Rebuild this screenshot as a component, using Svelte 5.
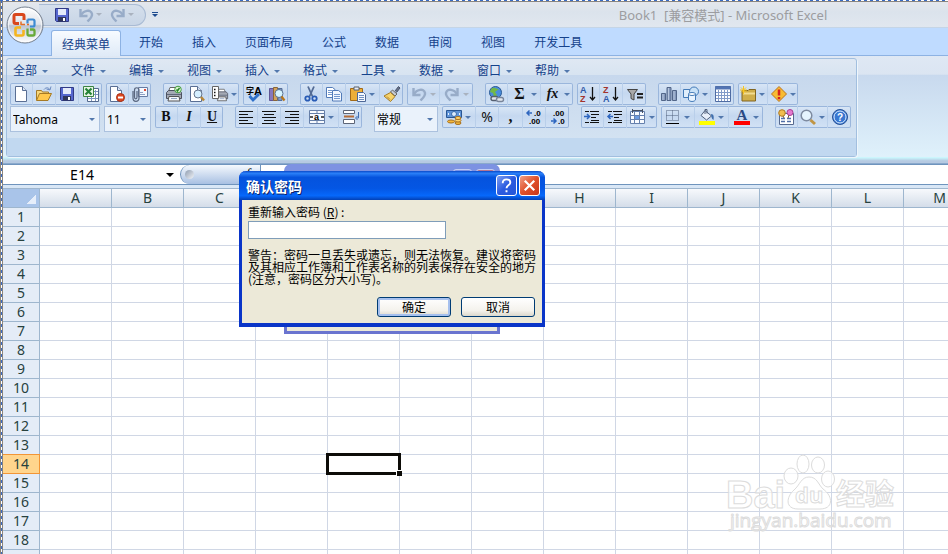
<script>
  const tabs = ["经典菜单", "开始", "插入", "页面布局", "公式", "数据", "审阅", "视图", "开发工具"];
  const menus = ["全部", "文件", "编辑", "视图", "插入", "格式", "工具", "数据", "窗口", "帮助"];
  const columns = "ABCDEFGHIJKLMNOPQRSTUVWXYZ".split("");
  const rows = Array.from({ length: 50 }, (_, i) => i + 1);

  let activeTab = $state("经典菜单");
  let selected = $state({ col: "E", row: 14 });
  let password = $state("");

  const page = `<path d="M2.500.5h7l4 4v11h-11z" fill="#fff" stroke="#5a6f94"/><path d="M9.500.5v4h4" fill="#dbe5f5" stroke="#5a6f94"/>`;
  const lines = (list) =>
    `<path d="${list.map(([x, y, w]) => `M${x} ${y}.5h${w}`).join("")}" stroke="#111" fill="none"/>`;
  const printer = `<path d="M4 1.500h7l1.500 4h-10z" fill="#fff" stroke="#666"/><path d="M.5 6.500l2-2h11l2 2v6H.5z" fill="#a4a9b4" stroke="#4d5260"/><path d="M1 8.500h14" stroke="#60687a"/><path d="M3 10.500h10l1 4.500H2z" fill="#f4f6fa" stroke="#555"/><path d="M5 12.500h6" stroke="#8fa3c0"/>`;
  const undo = `<path d="M2.500 2v7h7" fill="none" stroke="#98acc8" stroke-width="2.400"/><path d="M3 8.500c2-5 10-7 11-1.500.5 3-2 5-4.500 7.500" fill="none" stroke="#98acc8" stroke-width="2.400"/>`;

  const icons = {
    page,
    undo,
    redo: `<g transform="matrix(-1 0 0 1 16 0)">${undo}</g>`,
    open: `<path d="M.5 14V4.500h5l1 1.500h6v3" fill="#f7d77c" stroke="#a67a25"/><path d="M.5 14.500l3-7h12l-3.500 7z" fill="#ffc84c" stroke="#a67a25"/><path d="M8 3.500c2-2.500 5-2 5.500 0M15 .5l-1 3.500-3.500-1" fill="none" stroke="#6b8ac0"/>`,
    save: `<path d="M1.500 1.500h13v13h-12l-1-1z" fill="#5667ce" stroke="#303a86"/><path d="M4 2h8v6H4z" fill="#e4eafa"/><path d="M4 10h8v4.500H4z" fill="#30365a"/><path d="M9 11h2v3H9z" fill="#fff"/>`,
    excel: `<path d="M7.500 2.500h8v13h-11v-5" fill="#fff" stroke="#53698d"/><path d="M11 5.500h4M11 8.500h4M5 12.500h10M12.500 4v11M8.500 11v4" stroke="#7c94bd"/><path d="M.5.5h10v10H.5z" fill="#e8f5e4" stroke="#3c8443"/><path d="M2.500 2.500l6 6M8.500 2.500l-6 6" stroke="#248337" stroke-width="2.200"/>`,
    deny: `<g transform="translate(-1 0)">${page}</g><circle cx="11.500" cy="11.500" r="4" fill="#dd4721" stroke="#a83216"/><path d="M9 11.500h5" stroke="#fff" stroke-width="2"/>`,
    mail: `<path d="M6.500 1.500h9v9h-9z" fill="#f4f8ff" stroke="#667ca5"/><path d="M8 8.500h5M8 6.500h3" stroke="#8da1c4"/><path d="M12 3h2v2h-2z" fill="#dc4a34"/><path d="M1 5v7c0 4.500 6 4.500 6 0V4c0-3-4.500-3-4.500 0v7c0 2.500 2.500 2.500 2.500 0V5" fill="none" stroke="#59667e" stroke-width="1.200"/>`,
    print: `${printer}<circle cx="12" cy="3.500" r="3.300" fill="#d9f2cf" stroke="#439b40"/><path d="M10.500 3.500l1 1.500 2-3" fill="none" stroke="#258525" stroke-width="1.400"/>`,
    preview: `<g transform="translate(-1 0)">${page}</g><circle cx="9" cy="8" r="4" fill="#d5efff" stroke="#66758c"/><path d="M12 11l3 3.500" stroke="#b78738" stroke-width="2.500"/>`,
    printset: `<g transform="translate(4 2) scale(.75 .85)">${printer}</g><path d="M.5.5h6v12h-6z" fill="#fff" stroke="#666"/><path d="M2 3.500h1.500M2 6.500h1.500M2 9.500h1.500" stroke="#111" stroke-width="1.500"/>`,
    spell: `<text x="0" y="8" font-size="8">字</text><text x="8" y="9" font-size="11">A</text><path d="M3.500 10l3.500 4 6-6" fill="none" stroke="#2f70c9" stroke-width="2.800"/>`,
    research: `<path d="M.5 2.500h4v12h-4z" fill="#8678bd" stroke="#5f5696"/><path d="M4.500 1.500h4v13h-4z" fill="#d4a35b" stroke="#896537"/><path d="M9 2.500h4v12H9z" fill="#809bc8" stroke="#546e99"/><circle cx="10" cy="7.500" r="4" fill="#d5f4ff" stroke="#5a718f"/><path d="M12.500 10.500l3 4" stroke="#b9771b" stroke-width="2.200"/>`,
    cut: `<path d="M5 .5l4.500 10M11 .5L6.500 10.500" stroke="#536b95" stroke-width="1.800"/><circle cx="4.500" cy="12.500" r="2.200" fill="none" stroke="#285bb5" stroke-width="1.800"/><circle cx="11.500" cy="12.500" r="2.200" fill="none" stroke="#285bb5" stroke-width="1.800"/>`,
    copy: `<path d="M.5 1.500h6l2.500 2v8H.5z" fill="#fff" stroke="#527bb8"/><path d="M6.500 4.500h6l3 2.500v8h-9z" fill="#f1f7ff" stroke="#527bb8"/><path d="M2 4.500h4M2 6.500h4M2 8.500h4M8 8.500h6M8 10.500h6M8 12.500h6" stroke="#7398ce"/>`,
    paste: `<path d="M.5 2.500h12v12H.5z" fill="#eeaf38" stroke="#a26a18"/><path d="M4 1h5v3H4z" fill="#e9edf3" stroke="#59616e"/><path d="M7.500 6.500h6l2 2v7h-8z" fill="#f5f9ff" stroke="#4e6897"/><path d="M9 9.500h5M9 11.500h5M9 13.500h5" stroke="#7090c0"/>`,
    brush: `<path d="M11 5l3.500-4.500 1.500 1.500-3.500 4.500" fill="#68748a" stroke="#48536c"/><path d="M8.500 4l4.500 4-2 2-4.500-4z" fill="#c5cbd6" stroke="#666"/><path d="M6.500 6.500l4.500 4-4.500 5-6.500-5.500z" fill="#f7d46c" stroke="#a47b27"/><path d="M3 10.500l3 3" stroke="#b7852e"/>`,
    link: `<circle cx="7.500" cy="6.500" r="6" fill="#4a8ddd" stroke="#285892"/><path d="M3 3c3-3 5 0 8 0l-4 3 2 3-3 2-1-4-3-1z" fill="#72b848"/><rect x="3" y="10.500" width="7" height="4" rx="2" fill="#e2e7ee" stroke="#555f70" stroke-width="1.400"/><rect x="8.500" y="11.500" width="7" height="4" rx="2" fill="#e2e7ee" stroke="#79859a" stroke-width="1.400"/>`,
    az: `<text x="0" y="7" font-size="9" fill="#315aa8">A</text><text x="0" y="16" font-size="9" fill="#a3332c">Z</text><path d="M12.500 1v13M10 11l2.500 3 2.500-3" fill="none" stroke="#111" stroke-width="1.300"/>`,
    za: `<text x="0" y="7" font-size="9" fill="#a3332c">Z</text><text x="0" y="16" font-size="9" fill="#315aa8">A</text><path d="M12.500 1v13M10 11l2.500 3 2.500-3" fill="none" stroke="#111" stroke-width="1.300"/>`,
    filter: `<path d="M.5 3.500h10l-3.500 4.500v6l-3-1.500V8z" fill="#aaa" stroke="#444"/><path d="M10 8h6M10 11.500h6" stroke="#222" stroke-width="1.800"/>`,
    chart: `<path d="M.5 7.500h4v7h-4zM6 1.500h4v13H6zM11.500 4.500h4v10h-4z" fill="#8498bb" stroke="#526689"/><path d="M2 8v6M7.500 2v12M13 5v9" stroke="#b8c8df"/>`,
    shapes: `<path d="M.5 3.500h8v8h-8z" fill="#e0eefb" stroke="#447bb8"/><circle cx="11" cy="5.500" r="4.500" fill="#c8e1f7" stroke="#447bb8"/><path d="M5.500 8v6c1 2 6 2 7 0V8z" fill="#e9f4ff" stroke="#447bb8"/><ellipse cx="9" cy="8" rx="3.500" ry="1.500" fill="#fff" stroke="#447bb8"/>`,
    table: `<path d="M.5.5h15v15H.5z" fill="#fff" stroke="#4f6ca3"/><path d="M0 2h16" stroke="#5274b3" stroke-width="3"/><path d="M1 6.500h14M1 9.500h14M1 12.500h14M3.500 4v11M6.500 4v11M9.500 4v11M12.500 4v11" stroke="#829bc8"/>`,
    folder: `<path d="M2 4.500h6l1-1h6.500v11.500H2z" fill="#cfae4b" stroke="#806522"/><path d="M3 7.500h12" stroke="#f2dc91" stroke-width="2"/><path d="M3.500 0v8M0 4h7M1 1.500l5 5M6 1.500l-5 5" stroke="#f9c51e"/>`,
    warn: `<path d="M8 .5L15.500 8 8 15.500.5 8z" fill="#f7bb32" stroke="#bc731b"/><path d="M8 3.500v6M8 11v2.200" stroke="#d5211c" stroke-width="2.500"/>`,
    left: lines([[1, 2, 14], [1, 5, 9], [1, 8, 14], [1, 11, 9], [1, 14, 14]]),
    center: lines([[1, 2, 14], [3, 5, 10], [1, 8, 14], [3, 11, 10], [1, 14, 14]]),
    right: lines([[1, 2, 14], [6, 5, 9], [1, 8, 14], [6, 11, 9], [1, 14, 14]]),
    merge: `<path d="M.5 1.500h15v13H.5zM.5 4.500h15M.5 11.500h15M8 1.500v3M8 11.500v3" fill="#f8fbff" stroke="#667fa8"/><text x="5" y="11" font-size="9">a</text><path d="M1 8h3M12 8h3" stroke="#222" stroke-width="1.500"/>`,
    wrap: `<path d="M.5 1.500h11v3H.5zM.5 10.500h11v4H.5z" fill="#fff" stroke="#5c6577"/><path d="M1 7.500h10" stroke="#b66c36" stroke-width="2"/><path d="M15.500 3v6h-2M14.500 7l-2 2 2 2" fill="none" stroke="#426fb1"/>`,
    money: `<path d="M.5 1.500h15v7H.5z" fill="#5f94d8" stroke="#285694"/><circle cx="8" cy="5" r="2.500" fill="#dcecff" stroke="#3c6ca9"/><path d="M2.500 4v2M13.500 4v2" stroke="#e6f2ff"/><ellipse cx="5" cy="12.500" rx="3.500" ry="1.500" fill="#f4b83c" stroke="#a66f1e"/><ellipse cx="12" cy="14" rx="3" ry="1.500" fill="#f4b83c" stroke="#a66f1e"/><ellipse cx="12" cy="11.500" rx="3" ry="1.500" fill="#ffd46c" stroke="#a66f1e"/><ellipse cx="12" cy="9" rx="3" ry="1.500" fill="#ffd46c" stroke="#a66f1e"/>`,
    decinc: `<path d="M6 4H1M3.500 1.500L1 4l2.500 2.500" fill="none" stroke="#2e66bf" stroke-width="1.500"/><text x="8" y="7" font-size="8">.0</text><text x="3" y="15" font-size="8">.00</text>`,
    decdec: `<path d="M1 12h5M3.500 9.500L6 12l-2.500 2.500" fill="none" stroke="#2e66bf" stroke-width="1.500"/><text x="3" y="7" font-size="8">.00</text><text x="8" y="15" font-size="8">.0</text>`,
    outdent: `${lines([[1, 2, 4], [6, 2, 9], [7, 5, 8], [7, 8, 5], [7, 11, 8], [1, 13, 4], [6, 13, 9]])}<path d="M0 7.500h5M3 5l2.500 2.500L3 10" fill="none" stroke="#2e66bf" stroke-width="1.500"/>`,
    indent: `${lines([[1, 2, 4], [6, 2, 9], [7, 5, 8], [7, 8, 5], [7, 11, 8], [1, 13, 4], [6, 13, 9]])}<path d="M6 7.500H1M3.500 5L1 7.500 3.500 10" fill="none" stroke="#2e66bf" stroke-width="1.500"/>`,
    cells: `<path d="M.5 2.500h14v12H.5zM4.500 2.500v12M9.500 2.500v12M.5 6.500h14M.5 10.500h14" fill="#f8fbff" stroke="#6580ad"/><path d="M5 7h4v3H5z" fill="#6c9be0"/><path d="M2.500 0v4M12.500 0v4M3 1.500h9" stroke="#454f60"/>`,
    borders: `<path d="M1.500 1.500h12v10h-12zM7.500 1.500v10M1.500 6.500h12" fill="none" stroke="#51617d" stroke-dasharray="1 1"/><path d="M1 14.500h13" stroke="#000"/>`,
    fill: `<path d="M6 1.500L12.500 7l-5 4L2 6.500z" fill="#e7eef9" stroke="#51617d"/><path d="M6 5V.5h2v4" fill="none" stroke="#51617d"/><path d="M12 5c3 0 3 3 2.500 6-2-1-2-3-2.500-6z" fill="#3f6fae"/><path d="M0 12h16v4H0z" fill="#ff0"/>`,
    color: `<text x="2.500" y="11" font-size="15" font-family="Liberation Serif, serif" fill="#2c4b84">A</text><path d="M0 12h16v4H0z" fill="#f00"/>`,
    form: `<path d="M1.500 4.500h14v11h-14z" fill="#fff" stroke="#56698e"/><path d="M3 9.500h4M3 12.500h4M9 9.500h4M9 12.500h4" stroke="#526fa7" stroke-width="1.500"/><circle cx="4" cy="4" r="3.300" fill="#f1bd4f" stroke="#af7a20"/><circle cx="12" cy="3.500" r="3" fill="#e47acf" stroke="#a93f94"/><path d="M5 7l1 2M11 6l-1 3" stroke="#765437"/>`,
    zoom: `<circle cx="6.500" cy="6.500" r="5.300" fill="#e6f5ff" stroke="#7e8ba0" stroke-width="1.500"/><path d="M10.500 11l4.500 4" stroke="#c09544" stroke-width="3"/>`,
    help: `<circle cx="8" cy="8" r="7.500" fill="#3977d1" stroke="#285296"/><circle cx="8" cy="8" r="6" fill="none" stroke="#d9eaff"/><text x="5" y="12" font-size="10" fill="#fff">?</text>`
  };

  // w: cell width, drop: has an arrow, glyph: lettered button
  const topClusters = [
    [
      [{ icon: "page", w: 23 }, { icon: "open", w: 23 }, { icon: "save", w: 23 }, { icon: "excel", w: 23 }],
      [{ icon: "deny", w: 23 }, { icon: "mail", w: 22 }]
    ],
    [
      [{ icon: "print", w: 23 }, { icon: "preview", w: 23 }, { icon: "printset", w: 30, drop: true }],
      [{ icon: "spell", w: 23 }, { icon: "research", w: 22 }]
    ],
    [
      [{ icon: "cut", w: 23 }, { icon: "copy", w: 23 }, { icon: "paste", w: 34, drop: true }, { icon: "brush", w: 23 }],
      [{ icon: "undo", w: 33, drop: true, off: true }, { icon: "redo", w: 33, drop: true, off: true }]
    ],
    [
      [{ icon: "link", w: 23 }, { glyph: "Σ", kind: "big", w: 33, drop: true }, { glyph: "fx", kind: "fx", w: 32, drop: true }],
      [{ icon: "az", w: 23 }, { icon: "za", w: 23 }, { icon: "filter", w: 23 }]
    ],
    [
      [{ icon: "chart", w: 23 }, { icon: "shapes", w: 30, drop: true }, { icon: "table", w: 23 }],
      [{ icon: "folder", w: 30, drop: true }, { icon: "warn", w: 30, drop: true }]
    ]
  ];
  const bottomClusters = [
    [
      { options: ["Tahoma", "Arial"], label: "字体", w: 90 },
      { options: ["11", "12"], label: "字号", w: 47 },
      [{ glyph: "B", w: 23 }, { glyph: "I", kind: "it", w: 23 }, { glyph: "U", kind: "un", w: 22 }]
    ],
    [[{ icon: "left", w: 23 }, { icon: "center", w: 23 }, { icon: "right", w: 23 }, { icon: "merge", w: 35, drop: true }, { icon: "wrap", w: 23 }]],
    [
      { options: ["常规", "数值"], label: "数字格式", w: 64 },
      [{ icon: "money", w: 34, drop: true }, { glyph: "%", kind: "sans", w: 23 }, { glyph: ",", kind: "big", w: 24 }, { icon: "decinc", w: 23 }, { icon: "decdec", w: 23 }]
    ],
    [
      [{ icon: "outdent", w: 23 }, { icon: "indent", w: 23 }, { icon: "cells", w: 30, drop: true }],
      [{ icon: "borders", w: 34, drop: true }, { icon: "fill", w: 34, drop: true }, { icon: "color", w: 34, drop: true }]
    ],
    [[{ icon: "form", w: 23 }, { icon: "zoom", w: 30, drop: true }, { icon: "help", w: 23 }]]
  ];
</script>

<svelte:head><title>Book1 - Microsoft Excel</title></svelte:head>

{#snippet svg(name)}
  <svg class="icon" viewBox="0 0 16 16" aria-hidden="true">{@html icons[name]}</svg>
{/snippet}

{#snippet bar(clusters)}
  <div class="toolbar">
    {#each clusters as cluster}
      <div class="cluster">
        {#each cluster as item}
          {#if item.options}
            <div class="combo" style="width: {item.w}px">
              <select aria-label={item.label}>
                {#each item.options as option}<option>{option}</option>{/each}
              </select>
              <i class="arrow"></i>
            </div>
          {:else}
            <div class="group">
              {#each item as cell}
                <button class="cell {cell.kind ?? ''}" class:off={cell.off} style="width: {cell.w}px" aria-label={cell.icon ?? cell.glyph}>
                  {#if cell.icon}{@render svg(cell.icon)}{:else}<span class="glyph">{cell.glyph}</span>{/if}
                  {#if cell.drop}<i class="arrow"></i>{/if}
                </button>
              {/each}
            </div>
          {/if}
        {/each}
      </div>
    {/each}
  </div>
{/snippet}

<div class="screen">
  <div class="window">
    <header class="titlebar">
      <div class="quick">
        <button aria-label="保存">{@render svg("save")}</button>
        <button class="off" aria-label="撤消">{@render svg("undo")}<i class="arrow"></i></button>
        <button class="off" aria-label="恢复">{@render svg("redo")}<i class="arrow"></i></button>
      </div>
      <button class="customize" aria-label="自定义快速访问工具栏"><i class="arrow"></i></button>
      <h1>Book1  [兼容模式] - Microsoft Excel</h1>
    </header>

    <button class="orb" aria-label="Office 按钮">
      <svg viewBox="0 0 38 38" aria-hidden="true">
        <defs>
          <linearGradient id="orbFill" x1="0" y1="0" x2="0" y2="1">
            <stop offset="0" stop-color="#fff" />
            <stop offset=".48" stop-color="#dfe3ea" />
            <stop offset=".52" stop-color="#bcc5d3" />
            <stop offset="1" stop-color="#fff" />
          </linearGradient>
        </defs>
        <circle cx="19" cy="19" r="18" fill="url(#orbFill)" stroke="#75808f" />
        <circle cx="19" cy="19" r="16.500" fill="none" stroke="#fff" stroke-opacity=".7" />
        <g fill="none" stroke-linejoin="round">
          <path d="M13 17.500H9.500q-1.500 0-1.500-1.500V10q0-1.500 1.500-1.500h7q1.500 0 1.500 1.500v4" stroke="#d9471c" stroke-width="3" />
          <path d="M21.500 13.500h5.500q1.500 0 1.500 1.500v4q0 1.500-1.500 1.500h-3M21.500 13.500v4" stroke="#3d8bd3" stroke-width="2.200" />
          <path d="M15 21.500h-4q-1.500 0-1.500 1.500v5q0 1.500 1.500 1.500h5q1.500 0 1.500-1.500v-4" stroke="#f5b51e" stroke-width="2.600" />
          <path d="M21.500 22.500v5.500q0 1.500 1.500 1.500h4q1.500 0 1.500-1.500v-3q0-1.500-1.500-1.500h-3" stroke="#68aa38" stroke-width="2.300" />
          <path d="M15 15.500v3h4M23 18.500h-2" stroke="#e46d25" stroke-width="1.500" />
        </g>
      </svg>
    </button>

    <nav class="tabs">
      {#each tabs as tab}
        <button class="tab" class:active={tab === activeTab} onclick={() => (activeTab = tab)}>{tab}</button>
      {/each}
    </nav>

    <section class="ribbon">
      <div class="panel">
        <div class="menus">
          {#each menus as menu}
            <button class="menu">{menu}<i class="arrow"></i></button>
          {/each}
        </div>
        {@render bar(topClusters)}
        {@render bar(bottomClusters)}
        <div class="caption"></div>
      </div>
    </section>

    <div class="formula">
      <div class="namebox">
        <input aria-label="名称框" value="{selected.col}{selected.row}" readonly />
        <i class="arrow"></i>
      </div>
      <div class="fxbar"><i class="knob"></i><button aria-label="插入函数">fx</button></div>
      <input class="entry" aria-label="编辑栏" />
    </div>
    <div class="splitter"></div>

    <div class="sheet">
      <table>
        <thead>
          <tr>
            <th class="corner" aria-label="全选"></th>
            {#each columns as col}<th class="colhead">{col}</th>{/each}
          </tr>
        </thead>
        <tbody>
          {#each rows as row}
            <tr>
              <th class="rowhead" class:current={row === selected.row}>{row}</th>
              {#each columns as col}
                <td class:picked={row === selected.row && col === selected.col} onclick={() => (selected = { col, row })}></td>
              {/each}
            </tr>
          {/each}
        </tbody>
      </table>
    </div>
  </div>

  <div class="ghost"><div class="ghost-buttons"><i></i><i></i></div></div>

  <form class="dialog" onsubmit={(e) => e.preventDefault()}>
    <div class="caption-bar">
      <h2>确认密码</h2>
      <button type="button" class="sys" aria-label="帮助">
        <svg viewBox="0 0 20 20"><path d="M6 7.500c0-5.500 8-5 8-.5 0 2.500-4 2.500-4 6M10 15v2" fill="none" stroke="#fff" stroke-width="2" /></svg>
      </button>
      <button type="button" class="sys close" aria-label="关闭">
        <svg viewBox="0 0 20 20"><path d="M5 5l10 10M15 5L5 15" stroke="#fff" stroke-width="2.300" /></svg>
      </button>
    </div>
    <div class="content">
      <label for="again">重新输入密码 (<u>R</u>) :</label>
      <input id="again" type="password" bind:value={password} />
      <p>警告：密码一旦丢失或遗忘，则无法恢复。建议将密码及其相应工作簿和工作表名称的列表保存在安全的地方(注意，密码区分大小写)。</p>
      <div class="actions">
        <button type="submit" class="push primary">确定</button>
        <button type="button" class="push">取消</button>
      </div>
    </div>
  </form>

  <svg class="watermark" viewBox="0 0 176 84" aria-hidden="true">
    <g class="mark">
      <ellipse cx="67" cy="24" rx="7" ry="8" />
      <ellipse cx="79" cy="12" rx="6" ry="9" />
      <ellipse cx="94" cy="13" rx="6.500" ry="8" />
      <ellipse cx="104" cy="27" rx="6.500" ry="8" />
      <path d="M85 25c8 0 9 7 14 12 11 8 10 20-3 20H74c-13 0-12-12-4-19 6-5 7-13 15-13z" />
      <text x="2" y="56" font-size="38" font-weight="bold">Bai</text>
      <text class="url" x="71" y="51" font-size="22" font-weight="bold">du</text>
      <text x="112" y="53" font-size="29" font-weight="bold">经验</text>
      <text class="url" x="6" y="75" font-size="19">jingyan.baidu.com</text>
    </g>
  </svg>
</div>

<style>
  :global(body) {
    overflow: hidden;
    font-family: "Noto Sans", "Noto Sans CJK SC", sans-serif;
    font-size: 12px;
  }
  .screen {
    position: relative;
    box-sizing: border-box;
    height: 100vh;
    overflow: hidden;
    padding: 2px 0 0 3px;
    background:
      repeating-linear-gradient(90deg, #3a6bc4 0 3px, #fff 3px 6px) 0 0 / 100% 1px no-repeat,
      repeating-linear-gradient(#3a6bc4 0 3px, #fff 3px 6px) 1px 0 / 1px 100% no-repeat,
      #8a857e;
  }
  .window {
    position: relative;
    display: flex;
    flex-direction: column;
    height: 100%;
    background: #fff;
  }
  button {
    margin: 0;
    padding: 0;
    border: 0;
    background: none;
    font: inherit;
    color: inherit;
  }
  input,
  select {
    box-sizing: border-box;
    min-width: 0;
    border: 0;
    outline: 0;
    font: inherit;
  }
  .icon {
    flex: none;
    width: 16px;
    height: 16px;
    overflow: visible;
    font-family: "Liberation Sans", "Noto Sans CJK SC", sans-serif;
    font-weight: 700;
  }
  .arrow {
    flex: none;
    width: 0;
    height: 0;
    border: 3px solid transparent;
    border-top-color: #5278ad;
    border-bottom: 0;
  }
  .off .arrow {
    border-top-color: #a9b2bf;
  }

  .titlebar {
    display: flex;
    align-items: center;
    height: 26px;
    box-sizing: border-box;
    padding-left: 36px;
    border-bottom: 1px solid #c5d5e6;
    background: linear-gradient(#e4e7ec, #dbe3ec 40%, #e1e7ef);
  }
  .quick {
    display: flex;
    align-items: center;
    gap: 8px;
    height: 22px;
    box-sizing: border-box;
    padding: 0 11px 0 15px;
    border: 1px solid #a9bbd4;
    border-left: 0;
    border-radius: 0 11px 11px 0;
    background: linear-gradient(#d5dfec, #c8d5e6);
  }
  .quick button {
    display: flex;
    align-items: center;
    gap: 2px;
  }
  .customize {
    margin: 0 6px;
    padding-top: 1px;
    border-top: 1px solid #1d4b8f;
  }
  .customize .arrow {
    display: block;
    border-top-color: #1d4b8f;
  }
  h1 {
    flex: 1;
    margin: 0;
    padding-left: 390px;
    padding-right: 56px;
    text-align: center;
    font-size: 13px;
    font-weight: 400;
    line-height: 24px;
    white-space: pre;
    color: #9c9da0;
  }
  .orb {
    position: absolute;
    left: 3px;
    top: 4px;
    z-index: 1;
    width: 38px;
    height: 38px;
  }
  .orb svg {
    display: block;
  }

  .tabs {
    display: flex;
    align-items: flex-end;
    gap: 7px;
    box-sizing: border-box;
    height: 28px;
    padding-left: 48px;
    border-bottom: 1px solid #8db2e3;
    background: #bfdbff;
    color: #15428b;
  }
  .tab {
    height: 26px;
    padding: 0 11px;
  }
  .tab.active {
    margin-bottom: -1px;
    padding: 0 10px;
    border: 1px solid #8db2e3;
    border-bottom: 0;
    border-radius: 3px 3px 0 0;
    background: linear-gradient(#f7fbff, #dfeaf7);
  }

  .ribbon {
    padding: 2px 91px 6px 3px;
    border-bottom: 1px solid #8aa9cc;
    background: linear-gradient(#dfe8f4, #dbe5f2 17%, #c8d9ee 18%, #dff1fb 94%, #c9f6fc 95%, #b6cae2 98%);
  }
  .panel {
    box-sizing: border-box;
    border: 1px solid #a2bfdf;
    border-radius: 3px;
    background: linear-gradient(#dfe8f3, #d8e4f1 16%, #c7d8ed 17%, #d6e5f3);
    box-shadow: 1px 1px #eef6fc;
  }
  .menus {
    display: flex;
    height: 24px;
    padding-left: 6px;
    color: #15428b;
  }
  .menu {
    display: flex;
    align-items: center;
    gap: 5px;
    width: 58px;
    line-height: 22px;
  }
  .toolbar {
    display: flex;
    align-items: flex-start;
    gap: 12px;
    padding-left: 3px;
    margin-bottom: 1px;
  }
  .cluster {
    display: flex;
    gap: 4px;
  }
  .group {
    display: flex;
    height: 22px;
    border-radius: 2px;
    background: linear-gradient(#dae7f6, #c5d8f0 45%, #d2e2f5);
    box-shadow: inset 0 0 0 1px #9ab6dc;
  }
  .cell {
    display: flex;
    align-items: center;
    justify-content: center;
    gap: 3px;
    box-sizing: border-box;
    border-right: 1px solid #b9cfea;
  }
  .cell:last-child {
    border-right: 0;
  }
  .glyph {
    width: 16px;
    text-align: center;
    font-family: "Liberation Serif", serif;
    font-size: 14px;
    font-weight: 700;
    line-height: 20px;
    color: #111;
  }
  .it .glyph,
  .fx .glyph {
    font-style: italic;
  }
  .un .glyph {
    text-decoration: underline;
  }
  .big .glyph {
    font-size: 16px;
  }
  .sans .glyph {
    font-family: "Noto Sans", sans-serif;
    font-weight: 400;
  }
  .combo {
    display: flex;
    align-items: center;
    box-sizing: border-box;
    height: 26px;
    padding-right: 4px;
    border: 1px solid #abc1de;
    background: #eaf2fb;
  }
  .combo select {
    flex: 1;
    height: 24px;
    padding: 0 2px;
    appearance: none;
    background: none;
    color: #000;
  }
  .caption {
    height: 18px;
    margin-top: 6px;
    background: #c1d8f0;
  }

  .formula {
    display: flex;
    box-sizing: border-box;
    height: 21px;
    border: solid #6f94bd;
    border-width: 1px 0;
    font-size: 14px;
  }
  .namebox {
    display: flex;
    align-items: center;
    width: 177px;
    box-sizing: border-box;
    padding-right: 6px;
  }
  .namebox input {
    flex: 1;
    height: 19px;
    padding: 0 5px 0 0;
    text-align: center;
    background: none;
  }
  .namebox .arrow {
    border-width: 4px 4px 0;
    border-top-color: #000;
  }
  .fxbar {
    display: flex;
    align-items: center;
    justify-content: space-between;
    width: 81px;
    box-sizing: border-box;
    padding: 0 4px;
    border: solid #6f94bd;
    border-width: 0 1px;
    border-radius: 10px 0 0 10px;
    background: linear-gradient(#f5f9fe, #a8c0e2);
    font-family: "Liberation Serif", serif;
    font-style: italic;
  }
  .knob {
    width: 9px;
    height: 9px;
    border-radius: 50%;
    background: linear-gradient(135deg, #8e9cb0, #f3f5f8);
  }
  .entry {
    flex: 1;
  }
  .splitter {
    flex: none;
    height: 4px;
    box-sizing: border-box;
    border-bottom: 1px solid #9eb6ce;
    background: #d9e7f6;
  }

  .sheet {
    flex: 1;
    min-height: 0;
    overflow: hidden;
  }
  table {
    border-collapse: separate;
    border-spacing: 0;
    font-size: 14px;
    line-height: 18px;
    color: #27413e;
  }
  th,
  td {
    position: relative;
    box-sizing: border-box;
    height: 19px;
    padding: 0;
    border: solid #d0d7e5;
    border-width: 0 1px 1px 0;
    font-weight: 400;
  }
  .colhead {
    min-width: 72px;
    border-color: #9eb6ce;
    background: linear-gradient(#f7f9fc, #d4dde9);
  }
  .corner,
  .rowhead {
    min-width: 37px;
    border-color: #9eb6ce;
    background: #e4ecf7;
  }
  .corner {
    background: linear-gradient(135deg, transparent 50%, #e6eefa 51%) 23px 5px / 10px 10px no-repeat, #a9c4e9;
  }
  .current {
    border-color: #f29536;
    background: #ffd58d;
    box-shadow: 0 -1px #f29536;
  }
  .picked {
    z-index: 1;
  }
  .picked::before {
    content: "";
    position: absolute;
    inset: -2px;
    border: 3px solid #0d0c08;
  }
  .picked::after {
    content: "";
    position: absolute;
    right: -3px;
    bottom: -3px;
    width: 5px;
    height: 5px;
    border: solid #fff;
    border-width: 1px 0 0 1px;
    background: #0d0c08;
  }

  .ghost {
    position: absolute;
    left: 284px;
    top: 164px;
    z-index: 1;
    width: 216px;
    height: 170px;
    box-sizing: border-box;
    border: 3px solid #6a74cf;
    border-top: 24px solid #7d92e2;
    border-radius: 7px 7px 0 0;
    background: #ece9d8;
  }
  .ghost-buttons {
    display: flex;
    justify-content: flex-end;
    gap: 4px;
    margin: -19px 2px 0 0;
  }
  .ghost-buttons i {
    width: 19px;
    height: 19px;
    box-sizing: border-box;
    border: 1px solid #c4cdf2;
    border-radius: 3px;
    background: #7c93e6;
  }
  .ghost-buttons i:last-child {
    background: #b5748f;
  }

  .dialog {
    position: absolute;
    left: 239px;
    top: 171px;
    z-index: 2;
    width: 306px;
    box-sizing: border-box;
    border: solid #0a35c8;
    border-width: 0 3px 4px;
    border-radius: 7px 7px 0 0;
    background: #ece9d8;
    font-family: "Noto Sans CJK SC", sans-serif;
    color: #000;
  }
  .caption-bar {
    display: flex;
    align-items: center;
    gap: 2px;
    height: 29px;
    margin: 0 -3px;
    padding: 0 5px 0 7px;
    border-radius: 7px 7px 0 0;
    background: linear-gradient(#0a49c9, #2a80f8 8%, #0553dd 22%, #0456e4 60%, #0668fb 85%, #0340b4);
  }
  h2 {
    flex: 1;
    margin: 0;
    font-size: 14px;
    line-height: 28px;
    color: #fff;
    text-shadow: 1px 1px #0a246a;
  }
  .sys {
    width: 21px;
    height: 21px;
    box-sizing: border-box;
    border: 1px solid #fff;
    border-radius: 3px;
    background: linear-gradient(135deg, #7f9ff0, #2c5be0 50%, #2457d8);
  }
  .sys svg {
    display: block;
  }
  .close {
    background: linear-gradient(135deg, #f0a088, #e0512b 50%, #c8371a);
  }
  .content {
    display: flex;
    flex-direction: column;
    padding: 4px 6px 6px;
  }
  .content label {
    margin-bottom: 1px;
    line-height: 16px;
  }
  .content input {
    width: 198px;
    height: 18px;
    border: 1px solid #7f9db9;
    background: #fff;
  }
  .content p {
    margin: 10px 0 12px;
    width: 289px;
    line-height: 12px;
  }
  .actions {
    display: flex;
    justify-content: flex-end;
    gap: 10px;
    padding-right: 1px;
  }
  .push {
    width: 74px;
    height: 20px;
    box-sizing: border-box;
    border: 1px solid #003c74;
    border-radius: 3px;
    background: linear-gradient(#fff, #f4f2ec 70%, #dcd8cc);
    line-height: 18px;
  }
  .primary {
    box-shadow: inset 0 0 0 2px #a6c0ee;
  }

  .watermark {
    position: absolute;
    right: 48px;
    bottom: 18px;
    width: 176px;
    height: 84px;
    overflow: visible;
    pointer-events: none;
  }
  .mark {
    fill: #fff;
    fill-opacity: 0.7;
    stroke: #dcdcdc;
    stroke-width: 1;
    font-family: "Liberation Sans", "Noto Sans CJK SC", sans-serif;
  }
  .url {
    font-family: "Open Sans", sans-serif;
  }
</style>
